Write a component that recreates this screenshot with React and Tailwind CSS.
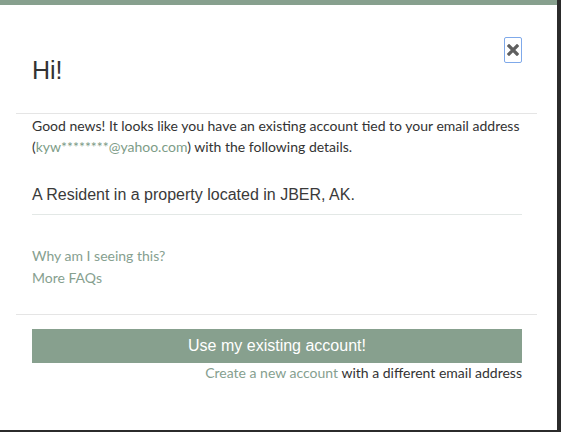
import React from 'react';

const ExistingAccountModal = () => {
  return (
    <div className="w-[561px] h-[432px] bg-[#2b2b2b] overflow-hidden">
      <div className="w-[557px] h-[430px] bg-white border-t-[5px] border-[#87a08e] text-[#333]">
        {/* Header */}
        <div className="ml-[16px] w-[521px] border-b border-[#e5e5e5] pl-[16px] pr-[15px] pt-[32px] pb-[28px] flex justify-between items-start">
          <h2 className="mt-[18px] text-[25px] leading-[30px] font-['Liberation_Sans',Arial,sans-serif] text-[#333]">
            Hi!
          </h2>
          <button className="w-[18px] h-[26px] border border-[#7fa9ea] rounded-[2px] flex items-center justify-center">
            <svg width="12" height="12" viewBox="0 0 12 12">
              <path d="M2 2L10 10M10 2L2 10" stroke="#5f5f5f" strokeWidth="3.2" strokeLinecap="square" />
            </svg>
          </button>
        </div>

        {/* Body */}
        <div className="ml-[16px] w-[521px] pl-[16px] pr-[15px] pt-[1px] font-['Lato',sans-serif] text-[14px] leading-[21px]">
          <p>
            Good news! It looks like you have an existing account tied to your email address
            {' ('}<span className="text-[#7d9c87]">kyw********@yahoo.com</span>) with the following details.
          </p>
          <div className="mt-[27px] pb-[8px] border-b border-[#e3e8e6] font-['Liberation_Sans',Arial,sans-serif] text-[16px] leading-[22px] text-[#3a3a3a]">
            A Resident in a property located in JBER, AK.
          </div>
          <div className="mt-[30px] pb-[25px] flex flex-col items-start leading-[22px] text-[#86a08f]">
            <a href="#">Why am I seeing this?</a>
            <a href="#">More FAQs</a>
          </div>
        </div>

        {/* Footer */}
        <div className="ml-[16px] w-[521px] border-t border-[#e5e5e5] pl-[16px] pr-[15px] pt-[14px]">
          <button className="w-full h-[34px] bg-[#87a08e] text-white text-[16px] font-['Liberation_Sans',Arial,sans-serif]">
            Use my existing account!
          </button>
          <div className="text-right font-['Lato',sans-serif] text-[14px] leading-[20px]">
            <a href="#" className="text-[#86a08f]">Create a new account</a> with a different email address
          </div>
        </div>
      </div>
    </div>
  );
};

export default function App() {
  return <ExistingAccountModal />;
}
